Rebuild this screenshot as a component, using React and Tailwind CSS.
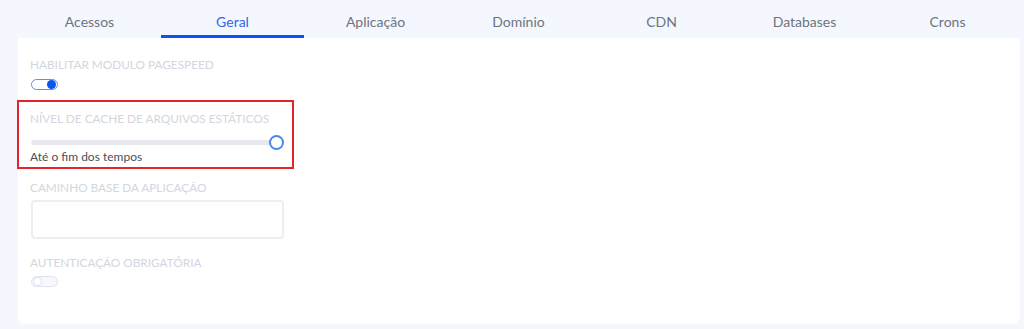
import React, { useState } from 'react';

const tabs = ['Acessos', 'Geral', 'Aplicação', 'Domínio', 'CDN', 'Databases', 'Crons'];

const Toggle = ({ on }) => (
  <div
    className={`w-[27px] h-[11px] rounded-full border flex items-center px-[1px] ${
      on ? 'border-[#5b8ff9] bg-white justify-end' : 'border-[#dfe3ec] bg-[#f7f8fb] justify-start'
    }`}
  >
    <span
      className={`block w-[9px] h-[9px] rounded-full ${on ? 'bg-[#0a55f5]' : 'bg-white border border-[#dfe3ec]'}`}
    />
  </div>
);

const Label = ({ children }) => (
  <div className="text-[11.8px] leading-[14px] uppercase text-[#d3d6de]">{children}</div>
);

const App = () => {
  const [active] = useState('Geral');

  return (
    <div className="w-[1024px] h-[329px] bg-[#f4f7fd] font-['Lato',sans-serif] overflow-hidden">
      {/* Tabs */}
      <div className="flex pl-[18px] pr-[5px] pt-[12px]">
        {tabs.map((t) => (
          <div
            key={t}
            className={`w-[143px] h-[26px] text-center text-[14px] leading-[20px] ${
              t === active ? 'text-[#2f67e8] border-b-[3px] border-[#0a55f0]' : 'text-[#6d7480]'
            }`}
          >
            {t}
          </div>
        ))}
      </div>

      {/* Card */}
      <div className="ml-[18px] mr-[4px] h-[286px] bg-white rounded-b-[6px] pl-[13px] pt-[20px]">
        <div className="pl-[-1px] ml-[-1px]">
          <Label>Habilitar Modulo Pagespeed</Label>
        </div>
        <div className="mt-[7px]">
          <Toggle on />
        </div>

        <div className="mt-[10px] ml-[-14px] w-[277px] h-[69px] border-2 border-[#e3242b] pl-[11px] pt-[10px]">
          <Label>Nível de cache de arquivos estáticos</Label>
          <div className="mt-[9px] ml-[1px] flex items-center w-[253px]">
            <div className="flex-1 h-[5px] bg-[#e8e9ee] rounded-l-full" />
            <div className="w-[15px] h-[15px] rounded-full border-2 border-[#4c86ef] bg-white ml-[-6px]" />
          </div>
          <div className="text-[12px] leading-[14px] text-[#4b4f56]">Até o fim dos tempos</div>
        </div>

        <div className="mt-[12px] ml-[-1px]">
          <Label>Caminho base da aplicação</Label>
        </div>
        <input
          className="mt-[5px] block w-[253px] h-[39px] rounded-[4px] border-2 border-[#eceef3] outline-none"
          type="text"
        />

        <div className="mt-[17px] ml-[-1px]">
          <Label>Autenticação obrigatória</Label>
        </div>
        <div className="mt-[6px]">
          <Toggle on={false} />
        </div>
      </div>
    </div>
  );
};

export default App;
